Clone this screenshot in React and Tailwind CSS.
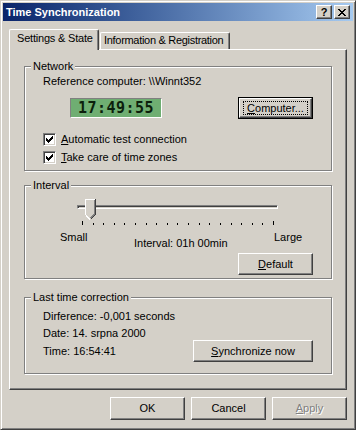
import React from 'react';

const raised =
  'border border-t-white border-l-white border-r-[#404040] border-b-[#404040] shadow-[inset_-1px_-1px_0_#808080]';

const CHECK = ['......X', '.....XX', 'X...XXX', 'XX.XXX.', 'XXXXX..', '.XXX...', '..X....'];

const Button = ({ children, className = '', isDefault, focused, disabled }) => (
  <div className={`${isDefault ? 'border border-black' : ''} ${className}`}>
    <div
      className={`relative flex h-full items-center justify-center ${raised} ${
        disabled ? 'text-[#808080] [text-shadow:1px_1px_0_#fff]' : ''
      }`}
    >
      {focused && <span className="absolute inset-x-[3px] inset-y-[2px] border border-dotted border-black" />}
      {children}
    </div>
  </div>
);

const Group = ({ title, className = '', children }) => (
  <div className={`relative border border-[#808080] shadow-[inset_1px_1px_0_#fff,1px_1px_0_#fff] ${className}`}>
    <span className="absolute -top-[7px] left-[6px] bg-[#d4d0c8] px-[2px] leading-[13px]">{title}</span>
    {children}
  </div>
);

const Checkbox = ({ children }) => (
  <div className="flex items-center gap-[5px] h-[13px]">
    <div className="flex w-[13px] h-[13px] items-center justify-center bg-white border border-t-[#808080] border-l-[#808080] border-r-white border-b-white shadow-[inset_1px_1px_0_#404040,inset_-1px_-1px_0_#d4d0c8]">
      <svg width="7" height="7" viewBox="0 0 7 7" shapeRendering="crispEdges">
        {CHECK.map((row, y) =>
          row.split('').map((c, x) => (c === 'X' ? <rect key={`${x}-${y}`} x={x} y={y} width="1" height="1" fill="#000" /> : null))
        )}
      </svg>
    </div>
    <span className="leading-[13px]">{children}</span>
  </div>
);

const Slider = () => (
  <div className="ml-[52px] mt-[13px]">
    <div className="relative w-[201px] h-[21px]">
      {/* track */}
      <div className="absolute left-0 right-0 top-[6px] h-[4px] border border-t-[#808080] border-l-[#808080] border-r-white border-b-white shadow-[inset_1px_1px_0_#404040,inset_-1px_-1px_0_#d4d0c8]" />
      {/* thumb */}
      <svg className="absolute left-[8px] top-0" width="11" height="21" viewBox="0 0 11 21" shapeRendering="crispEdges">
        <polygon points="0,0 11,0 11,16 5.5,21 0,16" fill="#d4d0c8" />
        <path d="M0.5 16 V0.5 H10" stroke="#fff" fill="none" />
        <path d="M1 16.5 L5 20.5" stroke="#fff" fill="none" />
        <path d="M10.5 0 V15.5 L5.5 20.5" stroke="#404040" fill="none" />
        <path d="M9.5 1 V15 L5.5 19" stroke="#808080" fill="none" />
      </svg>
    </div>
    <div className="flex w-[192px] h-[4px] items-end justify-between ml-[5px] mt-[1px]">
      {Array.from({ length: 19 }).map((_, i) => (
        <span key={i} className={`w-[1px] bg-black ${i === 0 || i === 18 ? 'h-[4px]' : 'h-[2px]'}`} />
      ))}
    </div>
  </div>
);

export default function App() {
  return (
    <div className="w-[356px] h-[430px] flex flex-col bg-[#d4d0c8] p-[2px] border border-t-[#d4d0c8] border-l-[#d4d0c8] border-r-[#404040] border-b-[#404040] shadow-[inset_1px_1px_0_#fff,inset_-1px_-1px_0_#808080] font-['Liberation_Sans',Arial,sans-serif] text-[11px] text-black">
      {/* Title bar */}
      <div className="flex h-[18px] items-center justify-between bg-gradient-to-r from-[#0a246a] to-[#a6caf0] pl-[3px] pr-[3px]">
        <span className="font-bold text-white leading-[13px]">Time Synchronization</span>
        <div className="flex gap-[2px]">
          <div className={`flex w-[16px] h-[14px] items-center justify-center bg-[#d4d0c8] ${raised}`}>
            <span className="font-bold text-[11px] leading-[11px]">?</span>
          </div>
          <div className={`flex w-[16px] h-[14px] items-center justify-center bg-[#d4d0c8] ${raised}`}>
            <svg width="8" height="7" viewBox="0 0 8 7" shapeRendering="crispEdges">
              <path d="M0 0h2v1h-2zM6 0h2v1h-2zM1 1h2v1h-2zM5 1h2v1h-2zM2 2h4v1h-4zM3 3h2v1h-2zM2 4h4v1h-4zM1 5h2v1h-2zM5 5h2v1h-2zM0 6h2v1h-2zM6 6h2v1h-2z" fill="#000" />
            </svg>
          </div>
        </div>
      </div>

      {/* Tabs */}
      <div className="flex h-[28px] items-end pl-[6px] whitespace-nowrap">
        <div className="relative z-10 -mb-[1px] h-[21px] w-[90px] rounded-t-[2px] bg-[#d4d0c8] border border-b-0 border-t-white border-l-white border-r-[#404040] shadow-[inset_-1px_0_0_#808080] pl-[7px] pt-[2px] leading-[13px] tracking-[-0.2px]">
          Settings &amp; State
        </div>
        <div className="ml-[1px] h-[17px] w-[130px] rounded-t-[2px] border border-b-0 border-t-white border-l-white border-r-[#404040] shadow-[inset_-1px_0_0_#808080] pl-[3px] pt-[1px] leading-[13px] tracking-[-0.3px]">
          Information &amp; Registration
        </div>
      </div>

      {/* Panel */}
      <div className={`mx-[6px] h-[341px] px-[14px] pt-[16px] ${raised}`}>
        <Group title="Network" className="h-[105px]">
          <div className="pl-[18px] pt-[8px] leading-[13px]">Reference computer: \\Winnt352</div>
          <div className="flex items-start pl-[45px] mt-[9px]">
            <div className="mt-[1px] flex w-[92px] h-[20px] items-center justify-center bg-[#6fae72] border border-t-[#808080] border-l-[#808080] border-r-white border-b-white">
              <span className="font-['DejaVu_Sans_Mono',monospace] font-bold text-[15px] leading-[15px] tracking-[0.5px] text-[#0c1f0c]">
                17:49:55
              </span>
            </div>
            <Button isDefault focused className="ml-[76px] w-[75px] h-[22px]">
              <span><u>C</u>omputer...</span>
            </Button>
          </div>
          <div className="flex flex-col gap-[5px] pl-[18px] mt-[14px]">
            <Checkbox><u>A</u>utomatic test connection</Checkbox>
            <Checkbox><u>T</u>ake care of time zones</Checkbox>
          </div>
        </Group>

        <Group title="Interval" className="h-[94px] mt-[14px]">
          <Slider />
          <div className="flex items-start pl-[35px] mt-[6px] h-[19px] leading-[13px]">
            <span className="w-[74px]">Small</span>
            <span className="w-[140px] mt-[6px]">Interval: 01h 00min</span>
            <span>Large</span>
          </div>
          <div className="flex justify-end pr-[18px] mt-[3px]">
            <Button className="w-[75px] h-[22px]">
              <span><u>D</u>efault</span>
            </Button>
          </div>
        </Group>

        <Group title="Last time correction" className="h-[77px] mt-[18px]">
          <div className="flex flex-col pl-[18px] pr-[18px] pt-[12px] leading-[13px]">
            <span>Dirference: -0,001 seconds</span>
            <span className="mt-[4px]">Date: 14. srpna 2000</span>
            <div className="flex items-center justify-between">
              <span>Time: 16:54:41</span>
              <Button className="w-[120px] h-[22px]">
                <span><u>S</u>ynchronize now</span>
              </Button>
            </div>
          </div>
        </Group>
      </div>

      {/* Dialog buttons */}
      <div className="flex justify-end gap-[6px] mt-[7px] mr-[6px]">
        <Button className="w-[75px] h-[23px]">OK</Button>
        <Button className="w-[75px] h-[23px]">Cancel</Button>
        <Button disabled className="w-[75px] h-[23px]">
          <span><u>A</u>pply</span>
        </Button>
      </div>
    </div>
  );
}
